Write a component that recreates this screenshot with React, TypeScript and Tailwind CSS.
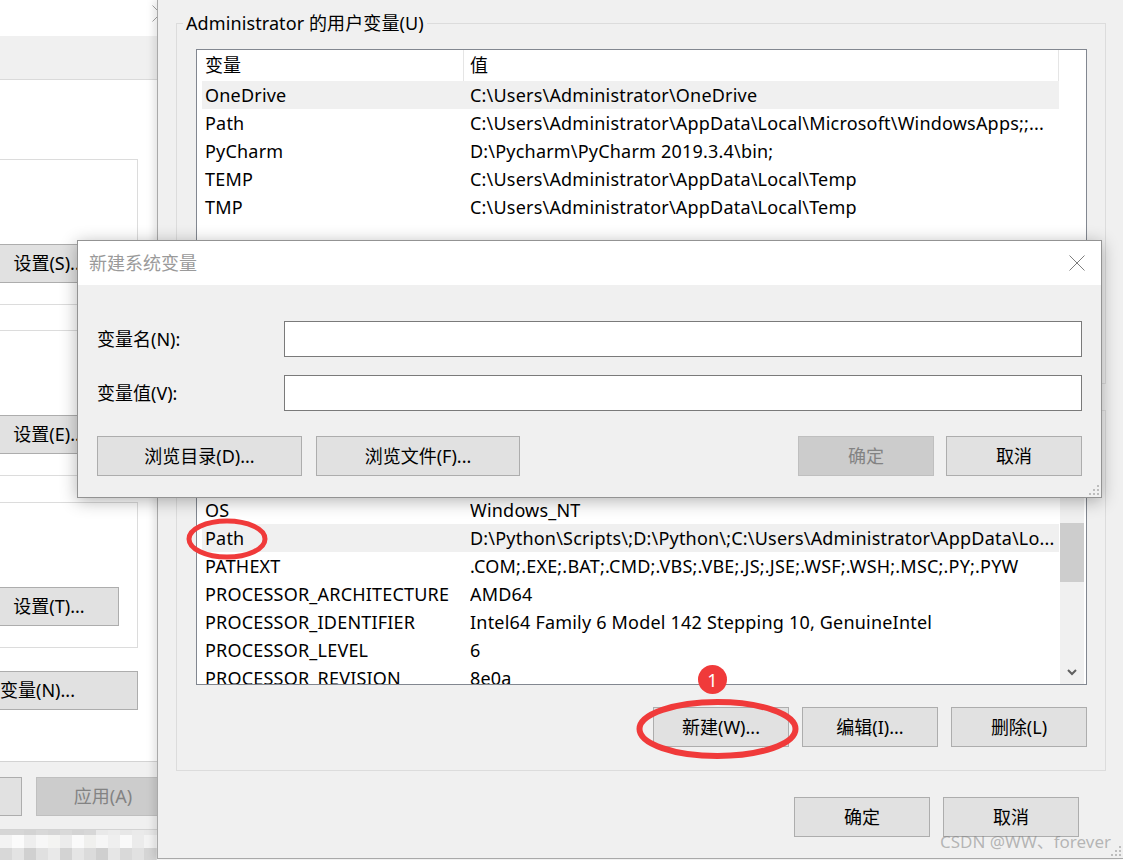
import React from "react";

const FONT = "font-['Noto_Sans','Noto_Sans_CJK_SC',sans-serif]";

function Btn({
  children,
  className = "",
  disabled = false,
}: {
  children?: React.ReactNode;
  className?: string;
  disabled?: boolean;
}) {
  return (
    <div
      className={`shrink-0 flex items-center justify-center border whitespace-nowrap ${
        disabled
          ? "bg-[#cccccc] border-[#bfbfbf] text-[#838383]"
          : "bg-[#e1e1e1] border-[#adadad] text-black"
      } ${className}`}
    >
      {children}
    </div>
  );
}

function Grip() {
  return (
    <svg width="12" height="12" viewBox="0 0 12 12">
      <g fill="#bdbdbd">
        <rect x="9" y="1" width="2" height="2" />
        <rect x="5" y="5" width="2" height="2" />
        <rect x="9" y="5" width="2" height="2" />
        <rect x="1" y="9" width="2" height="2" />
        <rect x="5" y="9" width="2" height="2" />
        <rect x="9" y="9" width="2" height="2" />
      </g>
    </svg>
  );
}

function LeftGroup({ children }: { children: React.ReactNode }) {
  return (
    <div className="shrink-0 w-[158px] h-[146px] border border-[#dcdcdc] flex flex-col items-end pr-[18px] pt-[84px]">
      <Btn className="w-[140px] h-[39px]">{children}</Btn>
    </div>
  );
}

function LeftWindow() {
  const rowA = ["#d6d6d6", "#d6d6d6", "#d3d3d3", "#d8d8d8", "#d5d5d5", "#d9d9d9", "#d4d4d4", "#d7d7d7", "#e9e9e9", "#ececec", "#e7e7e7", "#eaeaea", "#e8e8e8", "#ebebeb"];
  const rowB = ["#f3f3f3", "#fbfbfb", "#eeeeee", "#f7f7f7", "#f4f4f2", "#ececec", "#fafafa", "#f0f0ee", "#f6f6f6", "#efefef", "#f9f9f9", "#ebebeb", "#f3f3f3", "#f8f8f8"];
  const rowC = ["#d8d8d8", "#e3e3e3", "#d0d0d0", "#e0e0e0", "#e9e9e9", "#d3d3d3", "#e5e5e5", "#dbdbdb", "#cfcfcf", "#e6e6e6", "#d9d9d9", "#e1e1e1", "#d5d5d5", "#dedede"];
  return (
    <div className="w-[157px] h-[860px] shrink-0 overflow-hidden flex flex-col bg-white">
      <div className="h-[36px] shrink-0 flex justify-end items-start">
        <svg width="17" height="17" viewBox="0 0 17 17" className="mt-[5px] mr-[-12px] shrink-0">
          <path d="M0.5 0.5 L16.5 16.5 M16.5 0.5 L0.5 16.5" stroke="#a3a3a3" strokeWidth="1" fill="none" />
        </svg>
      </div>
      <div className="h-[44px] shrink-0 bg-[#f0f0f0] border-b border-[#dadada]" />
      <div className="h-[681px] shrink-0 flex flex-col items-end pr-[19px] pt-[79px]">
        <LeftGroup>设置(S)...</LeftGroup>
        <div className="mt-[25px]">
          <LeftGroup>设置(E)...</LeftGroup>
        </div>
        <div className="mt-[26px]">
          <LeftGroup>设置(T)...</LeftGroup>
        </div>
        <Btn className="mt-[23px] w-[237px] h-[39px]">环境变量(N)...</Btn>
      </div>
      <div className="h-[69px] shrink-0 bg-[#f0f0f0] border-y border-[#d3d3d3] flex items-start pt-[15px] gap-[14px]">
        <Btn className="ml-[-112px] w-[134px] h-[39px]">取消</Btn>
        <Btn disabled className="w-[134px] h-[39px]">
          应用(A)
        </Btn>
      </div>
      <div className="flex-1 flex flex-col">
        <div className="h-[5px] flex">
          {rowA.map((c, i) => (
            <div key={i} className="w-[12px] h-full shrink-0" style={{ background: c }} />
          ))}
        </div>
        <div className="h-[13px] flex">
          {rowB.map((c, i) => (
            <div key={i} className="w-[12px] h-full shrink-0" style={{ background: c }} />
          ))}
        </div>
        <div className="flex-1 flex">
          {rowC.map((c, i) => (
            <div key={i} className="w-[12px] h-full shrink-0" style={{ background: c }} />
          ))}
        </div>
      </div>
    </div>
  );
}

function GroupBox({
  label,
  children,
  className = "",
}: {
  label: string;
  children: React.ReactNode;
  className?: string;
}) {
  return (
    <div className={`shrink-0 border border-[#dcdcdc] flex flex-col ${className}`}>
      <div className="-mt-[13px] ml-[6px] px-[3px] w-fit h-[24px] leading-[24px] bg-[#f0f0f0] whitespace-nowrap tracking-[0.1px]">
        {label}
      </div>
      {children}
    </div>
  );
}

type Row = { name: string; value: string; selected?: boolean };

function ListHeader() {
  return (
    <div className="h-[31px] flex shrink-0 bg-white">
      <div className="w-[267px] pl-[8px] border-r border-[#e5e5e5] leading-[31px]">变量</div>
      <div className="w-[595px] pl-[6px] border-r border-[#e5e5e5] leading-[31px]">值</div>
    </div>
  );
}

function ListRows({ rows }: { rows: Row[] }) {
  return (
    <div className="flex flex-col ml-[5px] tracking-[0.2px]">
      {rows.map((r) => (
        <div
          key={r.name}
          className={`h-[28px] shrink-0 flex leading-[28px] whitespace-nowrap ${r.selected ? "bg-[#f0f0f0]" : ""}`}
        >
          <div className="w-[268px] pl-[3px] shrink-0 overflow-hidden">{r.name}</div>
          <div className="flex-1 overflow-hidden">{r.value}</div>
        </div>
      ))}
    </div>
  );
}

const userRows: Row[] = [
  { name: "OneDrive", value: "C:\\Users\\Administrator\\OneDrive", selected: true },
  { name: "Path", value: "C:\\Users\\Administrator\\AppData\\Local\\Microsoft\\WindowsApps;;..." },
  { name: "PyCharm", value: "D:\\Pycharm\\PyCharm 2019.3.4\\bin;" },
  { name: "TEMP", value: "C:\\Users\\Administrator\\AppData\\Local\\Temp" },
  { name: "TMP", value: "C:\\Users\\Administrator\\AppData\\Local\\Temp" },
];

const sysRows: Row[] = [
  { name: "NUMBER_OF_PROCESSORS", value: "8" },
  { name: "OS", value: "Windows_NT" },
  {
    name: "Path",
    value: "D:\\Python\\Scripts\\;D:\\Python\\;C:\\Users\\Administrator\\AppData\\Lo...",
    selected: true,
  },
  { name: "PATHEXT", value: ".COM;.EXE;.BAT;.CMD;.VBS;.VBE;.JS;.JSE;.WSF;.WSH;.MSC;.PY;.PYW" },
  { name: "PROCESSOR_ARCHITECTURE", value: "AMD64" },
  { name: "PROCESSOR_IDENTIFIER", value: "Intel64 Family 6 Model 142 Stepping 10, GenuineIntel" },
  { name: "PROCESSOR_LEVEL", value: "6" },
  { name: "PROCESSOR_REVISION", value: "8e0a" },
  { name: "PSModulePath", value: "%ProgramFiles%\\WindowsPowerShell\\Modules" },
];

function ActionButtons() {
  return (
    <div className="flex justify-end gap-[13px]">
      <Btn className="w-[136px] h-[40px]">新建(W)...</Btn>
      <Btn className="w-[136px] h-[40px]">编辑(I)...</Btn>
      <Btn className="w-[136px] h-[40px]">删除(L)</Btn>
    </div>
  );
}

function MainWindow() {
  return (
    <div className="relative z-10 flex-1 h-[859px] bg-[#f0f0f0] border-l border-b border-[#a9a9a9] shadow-[-3px_0_8px_rgba(0,0,0,0.12)] flex flex-col pl-[18px] pr-[17px] pt-[23px]">
      <GroupBox label="Administrator 的用户变量(U)">
        <div className="flex flex-col pl-[19px] pr-[18px] pt-[14px] pb-[7px]">
          <div className="h-[266px] bg-white border border-[#828790] flex overflow-hidden">
            <div className="w-[862px] flex flex-col shrink-0">
              <ListHeader />
              <ListRows rows={userRows} />
            </div>
          </div>
          <div className="mt-[21px]">
            <ActionButtons />
          </div>
        </div>
      </GroupBox>
      <GroupBox label="系统变量(S)" className="mt-[26px]">
        <div className="flex flex-col pl-[19px] pr-[18px] pt-[14px] pb-[23px]">
          <div className="h-[249px] bg-white border border-[#828790] flex overflow-hidden">
            <div className="w-[862px] flex flex-col shrink-0 overflow-hidden">
              <ListHeader />
              <ListRows rows={sysRows} />
            </div>
            <div className="w-[1px] shrink-0" />
            <div className="w-[24px] shrink-0 bg-[#f0f0f0] flex flex-col">
              <div className="h-[24px] shrink-0 flex items-center justify-center">
                <svg width="10" height="7" viewBox="0 0 10 7">
                  <path d="M1 6 L5 2 L9 6" stroke="#606060" strokeWidth="2" fill="none" />
                </svg>
              </div>
              <div className="h-[62px] shrink-0" />
              <div className="h-[59px] shrink-0 bg-[#cdcdcd]" />
              <div className="flex-1" />
              <div className="h-[24px] shrink-0 flex items-center justify-center">
                <svg width="10" height="7" viewBox="0 0 10 7">
                  <path d="M1 1 L5 5 L9 1" stroke="#606060" strokeWidth="2" fill="none" />
                </svg>
              </div>
            </div>
          </div>
          <div className="mt-[22px]">
            <ActionButtons />
          </div>
        </div>
      </GroupBox>
      <div className="mt-[26px] mr-[27px] flex justify-end gap-[13px]">
        <Btn className="w-[136px] h-[40px]">确定</Btn>
        <Btn className="w-[136px] h-[40px]">取消</Btn>
      </div>
      <div className="absolute right-[1px] bottom-[1px]">
        <Grip />
      </div>
    </div>
  );
}

function Dialog() {
  return (
    <div className="absolute left-[77px] top-[240px] z-20 w-[1025px] h-[258px] border border-[#939393] bg-[#f0f0f0] shadow-[0_3px_16px_rgba(0,0,0,0.3)] flex flex-col">
      <div className="h-[44px] shrink-0 bg-white flex items-center justify-between pl-[11px] pr-[16px]">
        <span className="text-[#9a9a9a]">新建系统变量</span>
        <svg width="16" height="16" viewBox="0 0 16 16">
          <path d="M0.5 0.5 L15.5 15.5 M15.5 0.5 L0.5 15.5" stroke="#7d7d7d" strokeWidth="1" fill="none" />
        </svg>
      </div>
      <div className="relative flex-1 flex flex-col px-[19px] pt-[36px]">
        <div className="h-[36px] flex items-center">
          <div className="w-[187px] shrink-0">变量名(N):</div>
          <div className="flex-1 h-[36px] bg-white border border-[#7a7a7a]" />
        </div>
        <div className="mt-[18px] h-[36px] flex items-center">
          <div className="w-[187px] shrink-0">变量值(V):</div>
          <div className="flex-1 h-[36px] bg-white border border-[#7a7a7a]" />
        </div>
        <div className="mt-[25px] flex items-center">
          <Btn className="w-[205px] h-[40px]">浏览目录(D)...</Btn>
          <Btn className="ml-[14px] w-[204px] h-[40px]">浏览文件(F)...</Btn>
          <div className="flex-1" />
          <Btn disabled className="w-[136px] h-[40px]">
            确定
          </Btn>
          <Btn className="ml-[12px] w-[136px] h-[40px]">取消</Btn>
        </div>
        <div className="absolute right-[1px] bottom-[1px]">
          <Grip />
        </div>
      </div>
    </div>
  );
}

export default function App() {
  return (
    <div className={`relative w-[1123px] h-[860px] overflow-hidden flex bg-white text-[18px] text-black ${FONT}`}>
      <LeftWindow />
      <MainWindow />
      <Dialog />
      <svg
        className="absolute left-0 top-0 z-30 pointer-events-none"
        width="1123"
        height="860"
        viewBox="0 0 1123 860"
      >
        <ellipse cx="227" cy="539" rx="38" ry="18" fill="none" stroke="#f03a3a" strokeWidth="5" />
        <ellipse cx="717.5" cy="729" rx="78" ry="27" fill="none" stroke="#f03a3a" strokeWidth="6" />
      </svg>
      <div className="absolute z-30 left-[698px] top-[665px] w-[29px] h-[29px] rounded-full bg-[#f03a3a] text-white flex items-center justify-center text-[18px] leading-none">
        1
      </div>
      <div className="absolute z-30 left-[940px] top-[830px] text-[17px] leading-[24px] text-[rgba(130,130,130,0.55)] whitespace-nowrap">
        CSDN @WW、forever
      </div>
    </div>
  );
}
